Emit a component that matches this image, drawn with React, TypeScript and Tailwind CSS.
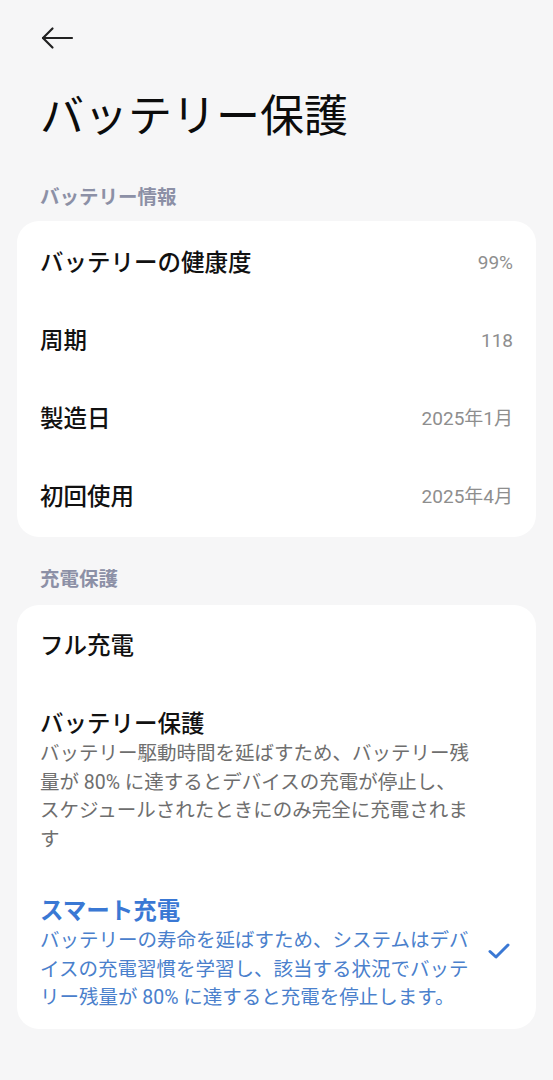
const font = { fontFamily: 'Roboto, "Noto Sans CJK JP", "Noto Sans", sans-serif' };

const infoRows = [
  { label: "バッテリーの健康度", value: "99%" },
  { label: "周期", value: "118" },
  { label: "製造日", value: "2025年1月" },
  { label: "初回使用", value: "2025年4月" },
];

function BackArrow() {
  return (
    <svg width="34" height="24" viewBox="0 0 34 24" fill="none" stroke="#222" strokeWidth="2.2" strokeLinecap="round" strokeLinejoin="round">
      <path d="M3 12h29" />
      <path d="M12.5 2.5 3 12l9.5 9.5" />
    </svg>
  );
}

function Check() {
  return (
    <svg width="22" height="18" viewBox="0 0 22 18" fill="none" stroke="#3a78d4" strokeWidth="3" strokeLinecap="round" strokeLinejoin="round">
      <path d="M2 9.5 8 15 20 3" />
    </svg>
  );
}

export default function App() {
  return (
    <div className="min-h-[1080px] w-[553px] bg-[#f6f6f7] text-[#111]" style={font}>
      <div className="flex h-[74px] items-center pl-[40px] pt-[1px]">
        <BackArrow />
      </div>

      <h1 className="px-[40px] pt-[15px] text-[44px] leading-[56px] font-normal text-[#0c0c0c]">バッテリー保護</h1>

      <div className="px-[40px] pt-[40px] pb-[10px] text-[19.5px] leading-[26px] font-bold text-[#8c90a6]">バッテリー情報</div>

      <div className="mx-[17px] rounded-[22px] bg-white py-[2px]">
        {infoRows.map((r) => (
          <div key={r.label} className="flex h-[78px] items-center justify-between pl-[23px] pr-[23px]">
            <span className="pt-[4px] text-[23.5px] font-medium">{r.label}</span>
            <span className="pt-[2px] text-[19px] text-[#8e8e8e]">{r.value}</span>
          </div>
        ))}
      </div>

      <div className="px-[40px] pt-[30px] pb-[12px] text-[19.5px] leading-[26px] font-bold text-[#8c90a6]">充電保護</div>

      <div className="mx-[17px] rounded-[22px] bg-white">
        <div className="flex h-[78px] items-center pl-[23px] pt-[6px] text-[23.5px] font-medium">フル充電</div>

        <div className="pl-[23px] pt-[25px] pb-[19px]">
          <div className="text-[23.5px] leading-[32px] font-medium">バッテリー保護</div>
          <div className="text-[19.5px] leading-[28.5px] text-[#6e6e6e]">
            <div>バッテリー駆動時間を延ばすため、バッテリー残</div>
            <div>量が 80% に達するとデバイスの充電が停止し、</div>
            <div>スケジュールされたときにのみ完全に充電されま</div>
            <div>す</div>
          </div>
        </div>

        <div className="flex items-center pl-[23px] pr-[26px] pt-[22px] pb-[16px]">
          <div className="flex-1">
            <div className="text-[23.5px] leading-[32px] font-bold text-[#3a78d4]">スマート充電</div>
            <div className="text-[19.5px] leading-[28.5px] text-[#4a80cc]">
              <div>バッテリーの寿命を延ばすため、システムはデバ</div>
              <div>イスの充電習慣を学習し、該当する状況でバッテ</div>
              <div>リー残量が 80% に達すると充電を停止します。</div>
            </div>
          </div>
          <div className="mb-[6px]">
            <Check />
          </div>
        </div>
      </div>
    </div>
  );
}
